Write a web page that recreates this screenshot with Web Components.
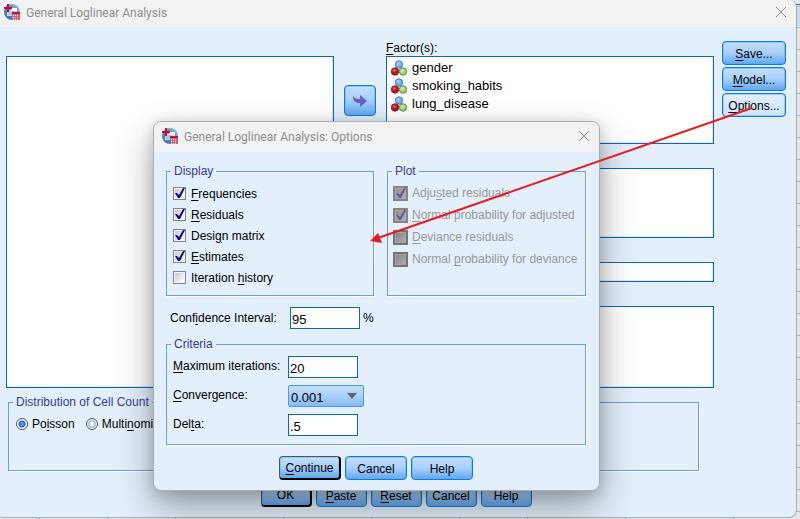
<!DOCTYPE html>
<html lang="en">
<head>
<meta charset="utf-8">
<title>General Loglinear Analysis</title>
<style>
    html, body { height: 100%; }
    body {
        margin: 0;
        overflow: hidden;
        font: 12px/14px "Liberation Sans", Arial, sans-serif;
        color: #000;
        background: #e6e6e6;
    }
</style>
</head>
<body>
<data-sheet>
    <app-window heading="General Loglinear Analysis">
        <loglinear-form></loglinear-form>
    </app-window>
    <app-window slot="overlay" class="dialog" heading="General Loglinear Analysis: Options">
        <options-form></options-form>
    </app-window>
    <callout-arrow slot="overlay"></callout-arrow>
</data-sheet>

<script>
// shared by every element that shows a mnemonic letter
const mnemonic = 'u { text-underline-offset: 2px; text-decoration-thickness: 1px; }';

class DataSheet extends HTMLElement {
    constructor() {
        super();
        this.attachShadow({mode:'open'});
        // column borders of the sheet, seen under the window's bottom edge
        const columns = [39, 107, 175, 283, 371, 459, 527, 625, 733]
            .map(x => `linear-gradient(#8f9aa6, #8f9aa6) ${x}px 100% / 1px 2px no-repeat`)
            .join(', ');
        this.shadowRoot.innerHTML = `
        <style>
        :host {
            display: flex;
            position: relative;
            box-sizing: border-box;
            height: 100vh;
            padding: 0 3px 1px 0;
            background:
                ${columns},
                linear-gradient(#1a66b8, #1a66b8) 0 4px / 100% 1px no-repeat,
                linear-gradient(#a8a8a8, #a8a8a8) 0 6px / 100% 1px no-repeat,
                linear-gradient(#c8dcf2, #c8dcf2) 0 8px / 100% 18px no-repeat,
                repeating-linear-gradient(#e6e6e6 0 21px, #9fb8d0 21px 22px) 0 6px no-repeat;
        }
        ::slotted(app-window:not(.dialog)) { flex: 1; }
        ::slotted(.dialog) {
            position: absolute;
            left: 153px;
            top: 121px;
        }
        ::slotted(callout-arrow) {
            position: absolute;
            left: 370px;
            top: 105px;
        }
        </style>
        <slot></slot>
        <slot name="overlay"></slot>
        `;
    }
}
customElements.define('data-sheet', DataSheet);

class AppIcon extends HTMLElement {
    constructor() {
        super();
        this.attachShadow({mode:'open'});
        this.shadowRoot.innerHTML = `
        <style>
        :host { display: block; width: 16px; height: 16px; }
        svg { display: block; }
        </style>
        <svg width="16" height="16" viewBox="0 0 16 16" aria-hidden="true">
            <defs>
                <linearGradient id="globe" x1="0" y1="1" x2="1" y2="0">
                    <stop offset="0" stop-color="#2f6ea8"/>
                    <stop offset=".6" stop-color="#5a96c8"/>
                    <stop offset="1" stop-color="#a9cbe6"/>
                </linearGradient>
            </defs>
            <circle cx="8" cy="8" r="8" fill="url(#globe)"/>
            <path d="M3 6h10v6H3z" fill="#e4eef7"/>
            <path d="M7 4h6v2H7z" fill="#fff"/>
            <path d="M3 8h10M3 10h10M5 7v5M7 7v5M9 7v5" stroke="#6fa0cc" stroke-width=".6"/>
            <path d="M3 0h2v3h3v2H5v3H3V5H0V3h3z" fill="#cf0a2c"/>
            <path d="M8 9h8v7H8z" fill="#d06070"/>
            <path d="M8 8h8v2H8z" fill="#c01830"/>
            <path d="M9 11h1v1H9zm2 0h1v1h-1zm2 0h1v1h-1zM9 13h1v1H9zm2 0h1v1h-1zm2 0h1v1h-1zM9 15h1v1H9zm2 0h1v1h-1zm2 0h1v1h-1z" fill="#fff"/>
        </svg>
        `;
    }
}
customElements.define('app-icon', AppIcon);

class AppWindow extends HTMLElement {
    constructor() {
        super();
        this.attachShadow({mode:'open'});
        this.shadowRoot.innerHTML = `
        <style>
        :host {
            display: flex;
            flex-direction: column;
            overflow: hidden;
            background: #e3effb;
            border: solid #a9adb2;
            border-width: 0 1px 1px 0;
            border-radius: 0 8px 8px 2px;
        }
        :host(.dialog) {
            border-width: 1px;
            border-radius: 8px;
            box-shadow: 0 16px 36px rgba(0, 0, 0, .34), 0 2px 14px rgba(0, 0, 0, .14);
        }
        header {
            display: flex;
            align-items: center;
            gap: 6px;
            height: 27px;
            padding: 0 8px 4px 4px;
            background: #f2f2f2;
            color: #8e8e8e;
            box-sizing: border-box;
        }
        :host(.dialog) header { height: 30px; padding: 0 8px 2px; }
        h1 {
            flex: 1;
            margin: 0;
            padding-top: 2px;
            font: 12px/16px Roboto, "Open Sans", sans-serif;
        }
        header button {
            display: block;
            width: 14px;
            height: 14px;
            padding: 1px;
            border: 0;
            background: none;
        }
        svg { display: block; }
        </style>
        <header>
            <app-icon></app-icon>
            <h1>${this.getAttribute('heading')}</h1>
            <button type="button" aria-label="Close">
                <svg width="12" height="12" viewBox="0 0 12 12"><path d="M1 1l10 10M11 1L1 11" stroke="#8a8a8a" fill="none"/></svg>
            </button>
        </header>
        <slot></slot>
        `;
    }
}
customElements.define('app-window', AppWindow);

class PushButton extends HTMLElement {
    constructor() {
        super();
        this.attachShadow({mode:'open'});
        this.shadowRoot.innerHTML = `
        <style>
        :host { display: block; }
        button {
            display: flex;
            align-items: center;
            justify-content: center;
            box-sizing: border-box;
            width: 100%;
            height: 24px;
            padding: 1px 0 0;
            border: 1px solid #0f7ad8;
            border-radius: 4px;
            background: linear-gradient(#c3dffc, #a9cffa 50%, #60a8f0);
            box-shadow: inset 0 0 0 1px rgba(90, 170, 245, .45);
            font: inherit;
            color: #000;
        }
        :host(.default) button { border: solid #000; border-width: 1px 2px 2px 1px; border-top-color: #555; border-left-color: #555; }
        :host(.hot) button { background: linear-gradient(#e2effd, #cfe4fb); }
        :host(.tall) button { height: 31px; }
        </style>
        <button type="button" ${this.hasAttribute('label') ? `aria-label="${this.getAttribute('label')}"` : ''}><span><slot></slot></span></button>
        `;
    }
}
customElements.define('push-button', PushButton);

class GroupBox extends HTMLElement {
    constructor() {
        super();
        this.attachShadow({mode:'open'});
        this.shadowRoot.innerHTML = `
        <style>
        :host { display: block; }
        fieldset {
            box-sizing: border-box;
            min-width: 0;
            height: 100%;
            margin: 0;
            padding: 0 6px 0 4px;
            border: 1px solid #6f9fd0;
            box-shadow: 1px 1px 0 #fff;
        }
        legend {
            margin: 0;
            padding: 0 3px;
            line-height: 14px;
            color: #3a3a9c;
        }
        .content { padding-left: 2px; }
        </style>
        <fieldset>
            <legend>${this.getAttribute('legend')}</legend>
            <div class="content"><slot></slot></div>
        </fieldset>
        `;
    }
}
customElements.define('group-box', GroupBox);

class CheckItem extends HTMLElement {
    constructor() {
        super();
        this.attachShadow({mode:'open'});
        const on = this.hasAttribute('checked') ? 'checked' : '';
        const off = this.hasAttribute('disabled') ? 'disabled' : '';
        this.shadowRoot.innerHTML = `
        <style>
        ${mnemonic}
        :host { display: block; }
        label { display: flex; align-items: center; gap: 5px; height: 21px; }
        input {
            appearance: none;
            flex: none;
            box-sizing: border-box;
            width: 13px;
            height: 13px;
            margin: 0;
            border: 1px solid #858585;
            background: linear-gradient(135deg, #c9c9cd, #fff) content-box, #f4f4f4;
            padding: 1px;
        }
        input:checked {
            background:
                url('data:image/svg+xml,<svg xmlns="http://www.w3.org/2000/svg" viewBox="0 0 11 11"><path d="M1 5L3 5L5 7L9 0L11 0L6 10L4 10Z" fill="%23120c8c"/></svg>') center / 11px 11px no-repeat border-box,
                linear-gradient(135deg, #c9c9cd, #fff) content-box, #f4f4f4;
        }
        :host([disabled]) label { height: 22px; gap: 4px; color: #999; }
        input:disabled {
            width: 15px;
            height: 15px;
            border: 2px solid #747474;
            background: linear-gradient(135deg, #858585, #acacac) content-box, #a5a5a5;
        }
        input:disabled:checked {
            border-color: #858585;
            background:
                url('data:image/svg+xml,<svg xmlns="http://www.w3.org/2000/svg" viewBox="0 0 11 11"><path d="M1 5L3 5L5 7L9 0L11 0L6 10L4 10Z" fill="%23635c92"/></svg>') center / 11px 11px no-repeat border-box,
                linear-gradient(135deg, #929292, #b0b0b0) content-box, #aaa;
        }
        </style>
        <label><input type="checkbox" ${on} ${off}><span><slot></slot></span></label>
        `;
    }
}
customElements.define('check-item', CheckItem);

class VariableItem extends HTMLElement {
    constructor() {
        super();
        this.attachShadow({mode:'open'});
        this.shadowRoot.innerHTML = `
        <style>
        :host { display: flex; align-items: center; gap: 4px; height: 18px; font-size: 13px; }
        </style>
        <svg width="17" height="16" viewBox="0 0 17 16" aria-hidden="true">
            <defs>
                <radialGradient id="b" cx=".4" cy=".35"><stop offset="0" stop-color="#a8d0fa"/><stop offset="1" stop-color="#66a6ea"/></radialGradient>
                <radialGradient id="r" cx=".4" cy=".35"><stop offset="0" stop-color="#f08088"/><stop offset=".5" stop-color="#cc1c2c"/><stop offset="1" stop-color="#b01020"/></radialGradient>
                <radialGradient id="g" cx=".4" cy=".35"><stop offset="0" stop-color="#d4efb4"/><stop offset="1" stop-color="#98cc68"/></radialGradient>
            </defs>
            <circle cx="8" cy="4.5" r="3.7" fill="url(#b)" stroke="#4c84cc"/>
            <circle cx="4" cy="11.5" r="3.7" fill="url(#r)" stroke="#a01828"/>
            <circle cx="12" cy="11.5" r="3.7" fill="url(#g)" stroke="#5a9440"/>
        </svg>
        <span><slot></slot></span>
        `;
    }
}
customElements.define('variable-item', VariableItem);

class LoglinearForm extends HTMLElement {
    constructor() {
        super();
        this.attachShadow({mode:'open'});
        this.shadowRoot.innerHTML = `
        <style>
        ${mnemonic}
        :host {
            flex: 1;
            display: flex;
            flex-direction: column;
            padding: 14px 10px 10px 6px;
        }
        .top { display: flex; gap: 8px; height: 347px; }
        .lists {
            flex: 1;
            display: grid;
            grid-template-columns: 1fr 32px 1fr;
            column-gap: 10px;
        }
        .list {
            box-sizing: border-box;
            background: #fff;
            border: 1px solid #1267b5;
            box-shadow: inset -1px -1px 0 #dfe8f2;
        }
        .source { margin-top: 15px; }
        .move { padding-top: 44px; }
        svg { display: block; }
        .targets { display: flex; flex-direction: column; }
        .targets .list + .list { margin-top: 24px; }
        .targets .label { height: 15px; }
        .factors { height: 88px; padding: 2px 4px; }
        .covariates { height: 70px; }
        .structure { height: 20px; }
        .contrast { flex: 1; }
        .side { display: flex; flex-direction: column; gap: 2px; width: 64px; }
        group-box { width: 691px; max-width: 100%; height: 76px; margin: 7px 0 0 2px; }
        .radios { display: flex; gap: 11px; padding: 8px 1px; }
        .radios label { display: flex; align-items: center; gap: 4px; height: 14px; }
        input {
            appearance: none;
            box-sizing: border-box;
            width: 12px;
            height: 12px;
            margin: 0;
            border: 1px solid #555;
            border-radius: 50%;
            background: radial-gradient(#fff 0 2px, #8db4dc 3px, #fff 5px);
        }
        input:checked { background: radial-gradient(#4c94e0 0 2px, #1a5cb4 3px, #fff 4px); }
        .actions { display: flex; justify-content: center; gap: 4px; padding-top: 12px; }
        .actions push-button { width: 51px; }
        </style>
        <div class="top">
            <div class="lists">
                <div class="list source"></div>
                <div class="move">
                    <push-button class="tall" label="Move to factors">
                        <svg width="16" height="16" viewBox="0 0 16 16"><path d="M1 3C2 5 4 6 8 6V2L15 8L8 14V10C3 10 1 8 1 3Z" fill="#6660cc"/></svg>
                    </push-button>
                </div>
                <div class="targets">
                    <div class="label"><u>F</u>actor(s):</div>
                    <div class="list factors">
                        <variable-item>gender</variable-item>
                        <variable-item>smoking_habits</variable-item>
                        <variable-item>lung_disease</variable-item>
                    </div>
                    <div class="list covariates"></div>
                    <div class="list structure"></div>
                    <div class="list contrast"></div>
                </div>
            </div>
            <div class="side">
                <push-button><u>S</u>ave...</push-button>
                <push-button><u>M</u>odel...</push-button>
                <push-button class="hot"><u>O</u>ptions...</push-button>
            </div>
        </div>
        <group-box legend="Distribution of Cell Count">
            <div class="radios">
                <label><input type="radio" name="dist" checked><span>Po<u>i</u>sson</span></label>
                <label><input type="radio" name="dist"><span>Multi<u>n</u>omi</span></label>
            </div>
        </group-box>
        <div class="actions">
            <push-button class="default">OK</push-button>
            <push-button><u>P</u>aste</push-button>
            <push-button><u>R</u>eset</push-button>
            <push-button>Cancel</push-button>
            <push-button>Help</push-button>
        </div>
        `;
    }
}
customElements.define('loglinear-form', LoglinearForm);

class OptionsForm extends HTMLElement {
    constructor() {
        super();
        this.attachShadow({mode:'open'});
        this.shadowRoot.innerHTML = `
        <style>
        ${mnemonic}
        :host { display: block; padding: 12px 13px 10px 12px; }
        .groups { display: grid; grid-template-columns: 208px 199px; column-gap: 13px; height: 132px; }
        .checks { padding-top: 5px; }
        .plot { margin-left: -1px; padding-top: 4px; white-space: nowrap; }
        .field { display: flex; align-items: center; height: 22px; }
        .interval { margin: 11px 0 8px 4px; }
        .interval label { width: 120px; }
        .criteria { display: grid; gap: 7px; padding: 5px 0 8px; }
        .criteria label { width: 115px; padding-bottom: 2px; }
        input, select {
            box-sizing: border-box;
            width: 70px;
            height: 22px;
            margin: 0;
            padding: 2px 1px 0;
            border: 1px solid #1267b5;
            border-radius: 0;
            background: #fff;
            font-family: inherit;
            font-size: 13px;
            color: #000;
        }
        .interval span { margin-left: 3px; }
        select {
            appearance: none;
            width: 76px;
            padding-left: 2px;
            border-color: #4a9ae8;
            border-radius: 2px;
            background:
                url('data:image/svg+xml,<svg xmlns="http://www.w3.org/2000/svg" viewBox="0 0 10 6"><path d="M0 0h10L5 6z" fill="%23606468"/></svg>') right 6px top 7px / 10px 6px no-repeat,
                linear-gradient(#c3dffc, #a9cffa 50%, #85bbf2);
        }
        .actions { display: flex; justify-content: center; gap: 4px; padding-top: 11px; }
        .actions push-button { width: 62px; }
        </style>
        <div class="groups">
            <group-box legend="Display">
                <div class="checks">
                    <check-item checked><u>F</u>requencies</check-item>
                    <check-item checked><u>R</u>esiduals</check-item>
                    <check-item checked>Desi<u>g</u>n matrix</check-item>
                    <check-item checked><u>E</u>stimates</check-item>
                    <check-item>Iteration <u>h</u>istory</check-item>
                </div>
            </group-box>
            <group-box legend="Plot">
                <div class="checks plot">
                    <check-item checked disabled>Adju<u>s</u>ted residuals</check-item>
                    <check-item checked disabled><u>N</u>ormal probability for adjusted</check-item>
                    <check-item disabled><u>D</u>eviance residuals</check-item>
                    <check-item disabled>Normal <u>p</u>robability for deviance</check-item>
                </div>
            </group-box>
        </div>
        <div class="field interval">
            <label for="ci">Conf<u>i</u>dence Interval:</label>
            <input id="ci" value="95"><span>%</span>
        </div>
        <group-box legend="Criteria">
            <div class="criteria">
                <div class="field"><label for="iter"><u>M</u>aximum iterations:</label><input id="iter" value="20"></div>
                <div class="field"><label for="conv"><u>C</u>onvergence:</label><select id="conv"><option>0.001</option></select></div>
                <div class="field"><label for="delta">Del<u>t</u>a:</label><input id="delta" value=".5"></div>
            </div>
        </group-box>
        <div class="actions">
            <push-button class="default"><u>C</u>ontinue</push-button>
            <push-button>Cancel</push-button>
            <push-button>Help</push-button>
        </div>
        `;
    }
}
customElements.define('options-form', OptionsForm);

// red annotation from the Options button to the dialog
class CalloutArrow extends HTMLElement {
    constructor() {
        super();
        this.attachShadow({mode:'open'});
        this.shadowRoot.innerHTML = `
        <style>
        :host { display: block; pointer-events: none; }
        svg { display: block; }
        </style>
        <svg width="384" height="140" viewBox="0 0 384 140" aria-hidden="true">
            <path d="M382 3L8 133" stroke="#e81c20" stroke-width="2"/>
            <path d="M0 136L8 128L12 138z" fill="#e81c20"/>
        </svg>
        `;
    }
}
customElements.define('callout-arrow', CalloutArrow);
</script>
</body>
</html>
